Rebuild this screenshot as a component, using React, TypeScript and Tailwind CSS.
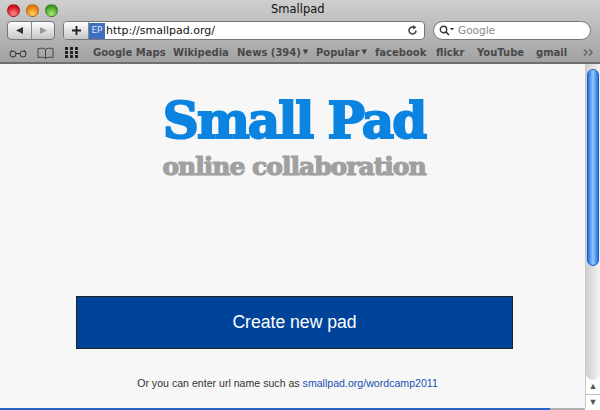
const UI = "font-['Liberation_Sans',Arial,sans-serif]";

const BOOKMARKS = [
  { label: "Google Maps", w: "w-[80px]" },
  { label: "Wikipedia", w: "w-[64px]" },
  { label: "News (394)", w: "w-[79px]", menu: true },
  { label: "Popular", w: "w-[59px]", menu: true },
  { label: "facebook", w: "w-[61px]" },
  { label: "flickr", w: "w-[41px]" },
  { label: "YouTube", w: "w-[59px]" },
  { label: "gmail", w: "w-[47px]" },
];

function Light({ className }: { className: string }) {
  return <span className={`h-[13px] w-[13px] rounded-full border border-black/25 ${className}`} />;
}

function Caret() {
  return <span className="ml-[2px] text-[7px] leading-none text-[#444]">▼</span>;
}

function Toolbar() {
  return (
    <div className="flex h-[64px] flex-col border-b-2 border-[#6f6f6f] bg-gradient-to-b from-[#cfcfcf] to-[#a2a2a2]">
      <div className="flex h-[18px] items-center">
        <div className="flex gap-[6px] pl-[7px] pt-[2px]">
          <Light className="bg-[radial-gradient(circle_at_50%_80%,#ff8a8a,#d40f1e_70%)]" />
          <Light className="bg-[radial-gradient(circle_at_50%_80%,#ffd35a,#e57a0c_70%)]" />
          <Light className="bg-[radial-gradient(circle_at_50%_80%,#a8ec7a,#3f9a22_70%)]" />
        </div>
        <span className="ml-[213px] pt-[2px] font-['DejaVu_Sans',sans-serif] text-[11.500px] leading-none text-[#111]">Smallpad</span>
      </div>

      <div className="mt-[3px] flex h-[19px] items-center pl-[7px]">
        <div className="flex h-[19px] w-[48px] rounded-[4px] border border-[#777] bg-gradient-to-b from-white to-[#c6c6c6]">
          <span className="flex w-[24px] items-center justify-center border-r border-[#888]">
            <svg width="9" height="9" viewBox="0 0 9 9"><path d="M8 1v7L1 4.500z" fill="#333" /></svg>
          </span>
          <span className="flex flex-1 items-center justify-center">
            <svg width="9" height="9" viewBox="0 0 9 9"><path d="M1 1v7l7-3.500z" fill="#999" /></svg>
          </span>
        </div>
        <div className="ml-[8px] flex h-[19px] w-[362px] items-center rounded-[4px] border border-[#777] bg-white">
          <span className="flex h-[17px] w-[25px] shrink-0 items-center justify-center rounded-l-[3px] border-r border-[#888] bg-gradient-to-b from-white to-[#c6c6c6]">
            <svg width="11" height="11" viewBox="0 0 11 11"><path d="M5.500 1v9M1 5.500h9" stroke="#222" strokeWidth="1.800" /></svg>
          </span>
          <span className="flex h-[16px] w-[16px] shrink-0 items-center justify-center bg-[#3f6fc0] font-['DejaVu_Sans',sans-serif] text-[9px] text-[#dfe8f8]">EP</span>
          <span className="ml-[1px] flex-1 font-['DejaVu_Sans',sans-serif] text-[11px] leading-none text-[#111]">http://smallpad.org/</span>
          <svg className="mr-[6px]" width="11" height="11" viewBox="0 0 11 11" fill="none">
            <path d="M9 5.500A3.500 3.500 0 1 1 7 2.300" stroke="#444" strokeWidth="1.600" />
            <path d="M6 0l3.500 2.400L6 4.600z" fill="#444" />
          </svg>
        </div>
        <div className="ml-[8px] flex h-[19px] w-[158px] items-center rounded-full border border-[#777] bg-white pl-[5px]">
          <svg width="16" height="11" viewBox="0 0 16 11" fill="none">
            <circle cx="4.500" cy="4.500" r="3.200" stroke="#333" strokeWidth="1.400" />
            <path d="M7 7l3 3" stroke="#333" strokeWidth="1.600" />
            <path d="M11 3h4l-2 2.500z" fill="#333" />
          </svg>
          <span className="ml-[3px] font-['DejaVu_Sans',sans-serif] text-[10.500px] leading-none text-[#8a8a8a]">Google</span>
        </div>
      </div>

      <div className="mt-[3px] flex h-[19px] items-center pl-[9px] text-[#3a3a3a]">
        <svg width="18" height="10" viewBox="0 0 18 10" fill="none" stroke="#333">
          <circle cx="4" cy="6" r="3" />
          <circle cx="14" cy="6" r="3" />
          <path d="M7 5.500h4M1 5l2-3M17 5l-2-3" />
        </svg>
        <svg className="ml-[10px]" width="17" height="12" viewBox="0 0 17 12" fill="none" stroke="#444">
          <path d="M8.500 2.500C7 1 4 1 1 1.500v9c3-.5 6-.5 7.500 1 1.500-1.500 4.500-1.500 7.500-1v-9c-3-.5-6-.5-7.500 1zM8.500 2.500v9" />
        </svg>
        <svg className="ml-[11px]" width="14" height="11" viewBox="0 0 14 11" fill="#222">
          <path d="M0 0h3v3H0zM5 0h3v3H5zM10 0h3v3h-3zM0 4h3v3H0zM5 4h3v3H5zM10 4h3v3h-3zM0 8h3v3H0zM5 8h3v3H5zM10 8h3v3h-3z" />
        </svg>
        <div className="ml-[14px] flex items-center font-['DejaVu_Sans',sans-serif] text-[10px] font-bold leading-none text-[#484848]">
          {BOOKMARKS.map((b) => (
            <span key={b.label} className={`flex items-center whitespace-nowrap ${b.w}`}>
              {b.label}
              {b.menu && <Caret />}
            </span>
          ))}
        </div>
        <svg width="11" height="7" viewBox="0 0 11 7" fill="none" stroke="#666" strokeWidth="1.600">
          <path d="M1 .5l3 3-3 3M6 .5l3 3-3 3" />
        </svg>
      </div>
    </div>
  );
}

function Scrollbar() {
  return (
    <div className="flex w-[15px] shrink-0 flex-col border-l border-[#c8c8c8] bg-white">
      <div className="min-h-0 flex-1 rounded-b-full bg-gradient-to-r from-[#cfcfcf] to-[#f4f4f4] pt-[5px]">
        <div className="ml-[1px] h-[197px] w-[12px] rounded-full border border-[#1d5fc0] bg-gradient-to-r from-[#1f72e6] via-[#93c8fa] to-[#1f72e6]" />
      </div>
      <div className="flex h-[28px] shrink-0 flex-col items-center justify-around text-[9px] leading-none text-[#555]">
        <span>▲</span>
        <span className="h-px w-full bg-[#bbb]" />
        <span>▼</span>
      </div>
    </div>
  );
}

export default function App() {
  return (
    <div className={`flex h-[410px] w-[600px] flex-col overflow-hidden bg-[#f7f7f7] ${UI}`}>
      <Toolbar />
      <div className="flex min-h-0 flex-1">
        <main className="flex flex-1 flex-col items-center">
          <h1 className="ml-[3px] mt-[28px] whitespace-nowrap font-['DejaVu_Serif',serif] text-[50px] font-bold leading-[58px] tracking-[-2px] text-[#0a84e0] [-webkit-text-stroke:2px_#0a84e0]">
            Small Pad
          </h1>
          <p className="ml-[3px] mt-[3px] whitespace-nowrap font-['DejaVu_Serif',serif] text-[25px] font-bold leading-[28px] tracking-[-1px] text-[#a0a0a0] [-webkit-text-stroke:1.200px_#a0a0a0]">
            online collaboration
          </p>
          <button
            type="button"
            className="ml-[4px] mt-[115px] h-[53px] w-[437px] shrink-0 border border-[#222] bg-[#004499] text-[17.600px] text-white"
          >
            Create new pad
          </button>
          <p className="mr-[10px] mt-[27px] text-[10.600px] leading-[14px] text-[#333]">
            Or you can enter url name such as <span className="text-[#1a4fb0]">smallpad.org/wordcamp2011</span>
          </p>
        </main>
        <Scrollbar />
      </div>
      <div className="flex h-[2px] w-[600px]">
        <span className="w-[550px] bg-[#2a62c8]" />
        <span className="w-[35px] bg-[#b0b0b0]" />
        <span className="flex-1 bg-white" />
      </div>
    </div>
  );
}
